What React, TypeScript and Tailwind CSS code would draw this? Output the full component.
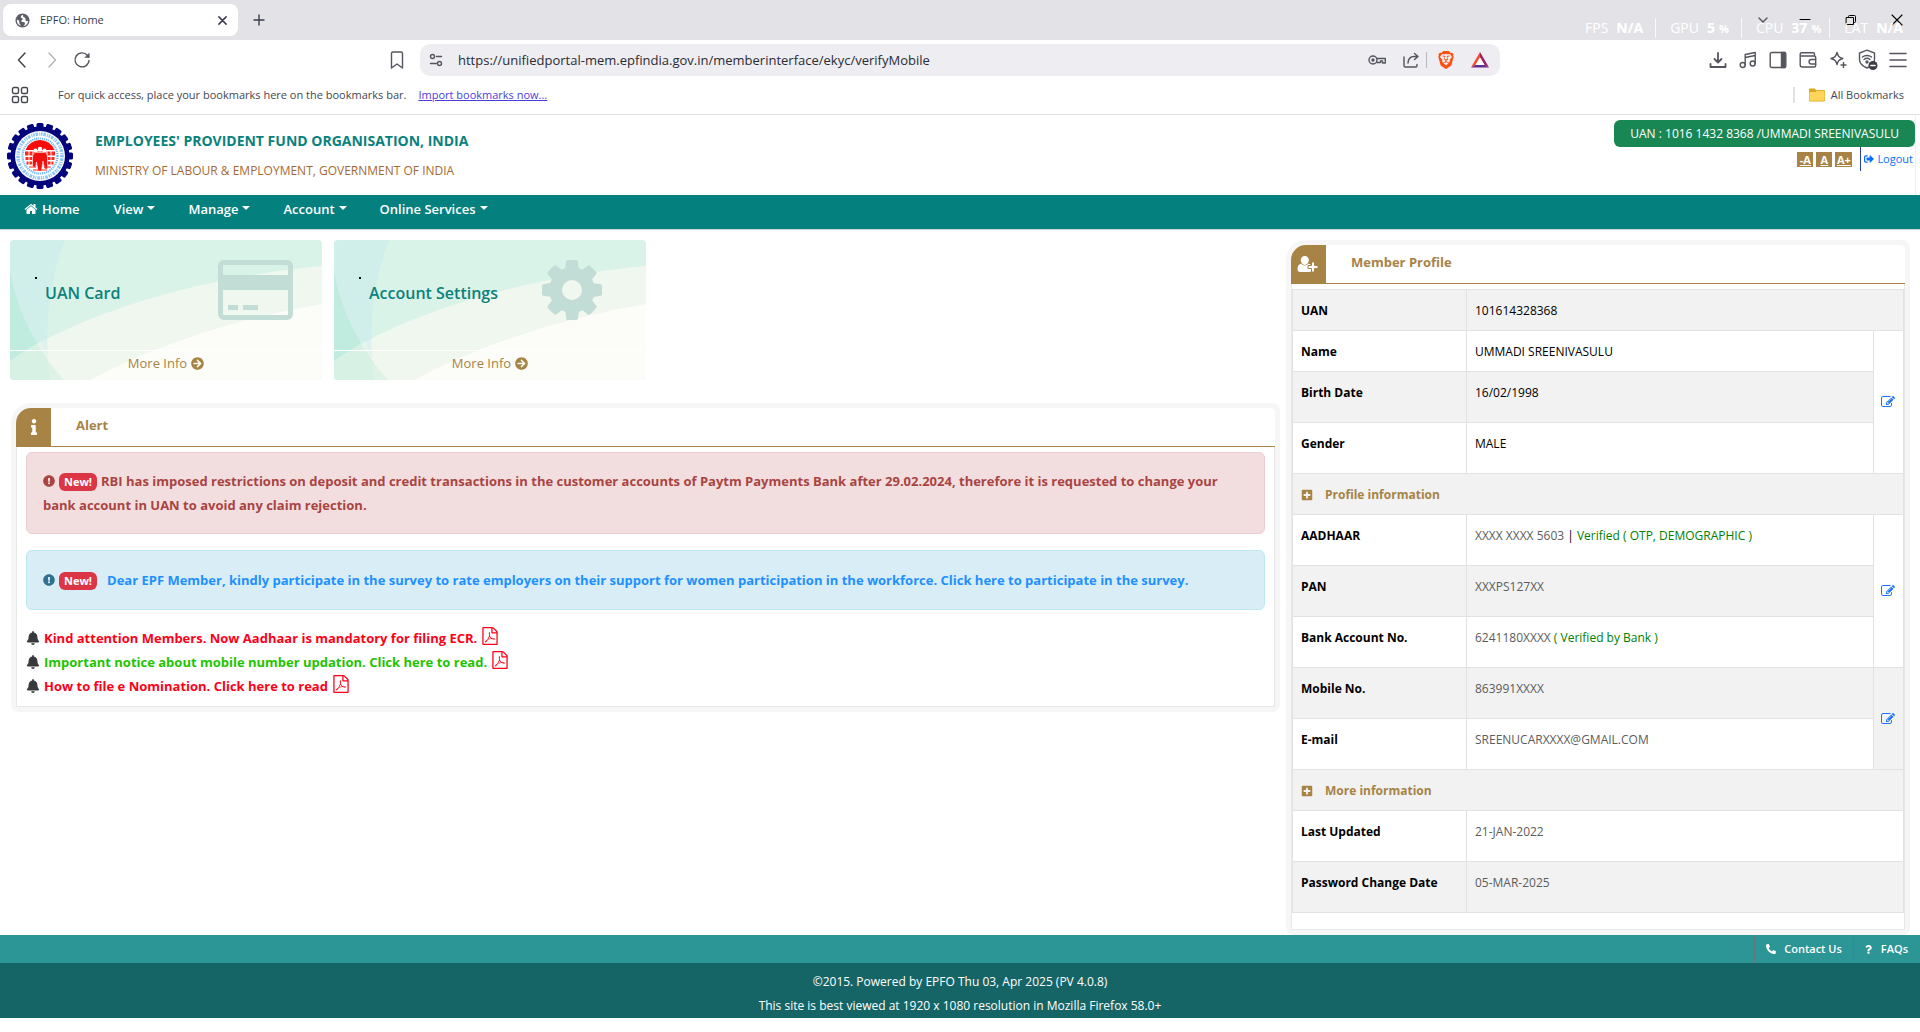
import React from 'react';
import type { ReactNode } from 'react';
import {
  FaArrowCircleRight,
  FaBell,
  FaExclamationCircle,
  FaInfo,
  FaPhoneAlt,
  FaPlusSquare,
  FaQuestion,
  FaSignOutAlt,
} from 'react-icons/fa';
import { SiBrave } from 'react-icons/si';

/* ---------- icons ---------- */

const HOME =
  'M1472 992v480q0 26-19 45t-45 19h-384v-384h-256v384h-384q-26 0-45-19t-19-45v-480q0-1 .5-3t.5-3l575-474 575 474q1 2 1 6zm223-69l-62 74q-8 9-21 11h-3q-13 0-21-7l-692-577-692 577q-12 8-24 7-13-2-21-11l-62-74q-8-10-7-23.5t11-21.5l719-599q32-26 76-26t76 26l244 204v-195q0-14 9-23t23-9h192q14 0 23 9t9 23v408l219 182q10 8 11 21.5t-7 23.5z';
const GEAR =
  'M1152 896q0-106-75-181t-181-75-181 75-75 181 75 181 181 75 181-75 75-181zm512-109v222q0 12-8 23t-20 13l-185 28q-19 54-39 91 35 50 107 138 10 12 10 25t-9 23q-27 37-99 108t-94 71q-12 0-26-9l-138-108q-44 23-91 38-16 136-29 186-7 28-36 28h-222q-14 0-24.5-8.5t-11.5-21.5l-28-184q-49-16-90-37l-141 107q-10 9-25 9-14 0-25-11-126-114-165-168-7-10-7-23 0-12 8-23 15-21 51-66.5t54-70.5q-27-50-41-99l-183-27q-13-2-21-12.5t-8-23.5v-222q0-12 8-23t19-13l186-28q14-46 39-92-40-57-107-138-10-12-10-24 0-10 9-23 26-36 98.5-107.5t94.5-71.5q13 0 26 10l138 107q44-23 91-38 16-136 29-186 7-28 36-28h222q14 0 24.5 8.5t11.5 21.5l28 184q49 16 90 37l142-107q9-9 24-9 13 0 25 10 129 119 165 170 7 8 7 22 0 12-8 23-15 21-51 66.5t-54 70.5q26 50 41 98l183 28q13 2 21 12.5t8 23.5z';
const EDIT =
  'M888 1184l116-116-152-152-116 116v56h96v96h56zm440-720q-16-16-33 1l-350 350q-17 17-1 33t33-1l350-350q17-17 1-33zm80 594v190q0 119-84.5 203.5t-203.5 84.5h-832q-119 0-203.5-84.5t-84.5-203.5v-832q0-119 84.5-203.5t203.5-84.5h832q63 0 117 25 15 7 18 23 3 17-9 29l-49 49q-14 14-32 8-23-6-45-6h-832q-66 0-113 47t-47 113v832q0 66 47 113t113 47h832q66 0 113-47t47-113v-126q0-13 9-22l64-64q15-15 35-7t20 29zm-96-738l288 288-672 672h-288v-288zm444 132l-92 92-288-288 92-92q28-28 68-28t68 28l152 152q28 28 28 68t-28 68z';
const PDF =
  'M1596 380q28 28 48 76t20 88v1152q0 40-28 68t-68 28h-1344q-40 0-68-28t-28-68v-1600q0-40 28-68t68-28h896q40 0 88 20t76 48zm-444-244v376h376q-10-29-22-41l-313-313q-12-12-41-22zm384 1528v-1024h-416q-40 0-68-28t-28-68v-416h-768v1536h1280zm-514-593q33 26 84 56 59-7 117-7 147 0 177 49 16 22 2 52 0 1-1 2l-2 2v1q-6 38-71 38-48 0-115-20t-130-53q-221 24-392 83-153 262-242 262-15 0-28-7l-24-12q-1-1-6-5-10-10-6-36 9-40 56-91.5t132-96.5q14-9 23 6 2 2 2 4 52-85 107-197 68-136 104-262-24-82-30.5-159.5t6.5-127.5q11-40 42-40h22q23 0 35 15 18 21 9 68-2 6-4 8 1 3 1 8v30q-2 123-14 192 55 164 146 238zm-576 411q52-24 137-158-51 40-87.5 84t-49.5 74zm398-920q-15 42-2 132 1-7 7-44 0-3 7-43 1-4 4-8-1-1-1-2t-1-2-1-3q-1-22-13-36 0 1-1 2v2zm-124 661q135-54 284-81-2-1-13-9.5t-16-13.5q-76-67-127-176-27 86-83 197-30 56-45 83zm646-16q-24-24-140-24 76 28 124 28 14 0 18-1 0-1-2-3z';

function Glyph({ d, className }: { d: string; className: string }) {
  return (
    <svg viewBox="0 0 1792 1792" className={className} fill="currentColor" aria-hidden="true">
      <path d={d} />
    </svg>
  );
}

function Line({
  box = '0 0 18 18',
  className = 'size-[18px]',
  children,
}: {
  box?: string;
  className?: string;
  children: ReactNode;
}) {
  return (
    <svg
      viewBox={box}
      className={className}
      fill="none"
      stroke="currentColor"
      strokeWidth={1.4}
      strokeLinecap="round"
      strokeLinejoin="round"
      aria-hidden="true"
    >
      {children}
    </svg>
  );
}

function IconButton({ label, className = '', children }: { label: string; className?: string; children: ReactNode }) {
  return (
    <button type="button" aria-label={label} className={`flex shrink-0 items-center justify-center ${className}`}>
      {children}
    </button>
  );
}

function UserPlus() {
  return (
    <svg viewBox="0 0 22 18" className="h-[18px] w-[22px]" fill="#fff" aria-hidden="true">
      <path d="M7.8 1c2.400 0 4 1.800 4 4.300S10.200 10 7.800 10 3.800 7.800 3.800 5.300 5.400 1 7.800 1Z" />
      <path d="M4.200 8.700c1 1.100 2.200 1.700 3.600 1.700s2.600-.6 3.600-1.700c2.300.2 3.700 2 3.700 5.400 0 1.900-1 2.900-2.700 2.900H3.200C1.500 17 .5 16 .5 14.100c0-3.400 1.400-5.200 3.700-5.400Z" />
      <path
        d="M14.500 7h3v3.500H21v3h-3.500V17h-3v-3.500H11v-3h3.500Z"
        stroke="#a78346"
        strokeWidth="1"
      />
    </svg>
  );
}

function Emblem() {
  const teeth = Array.from({ length: 20 }, (_, i) => i * 18);
  return (
    <svg viewBox="0 0 66 66" className="size-[66px] shrink-0" role="img" aria-label="EPFO">
      {teeth.map((a) => (
        <rect key={a} x="29.500" y="0" width="7" height="8" rx="1.500" fill="#04047c" transform={`rotate(${a} 33 33)`} />
      ))}
      <circle cx="33" cy="33" r="29.500" fill="#04047c" />
      <circle cx="33" cy="33" r="25" fill="#fff" />
      <circle cx="33" cy="33" r="22" fill="none" stroke="#5fb0f5" strokeWidth="3.400" strokeDasharray="1.500 1 2.500 1.200 1 .8" opacity=".75" />
      <circle cx="33" cy="33" r="17.500" fill="none" stroke="#5fb0f5" strokeWidth="2.200" strokeDasharray="1.200 .8" opacity=".9" />
      <circle cx="33" cy="32.500" r="15.800" fill="#fff" />
      <path d="M18.500 27a15.500 15.500 0 0 1 29 0Z" fill="#fb0a0a" />
      <path d="M18 28.500h30v4H18zM18.500 34h29v3h-29zM19.500 38.500h27v3h-27z" fill="#fb2a20" />
      <path
        d="M22 28v14M26 28v14M40 28v14M44 28v14"
        stroke="#fff"
        strokeWidth=".9"
      />
      <circle cx="28.500" cy="27.500" r="2" fill="#fff" />
      <circle cx="33" cy="26" r="2.200" fill="#fff" />
      <circle cx="37.500" cy="27.500" r="2" fill="#fff" />
      <path d="M25.500 43v-9c0-3 2-4.500 3.500-4.500h8.500c1.500 0 3 1.500 3 4.500v12h-3l-1.500-8-1.500 10h-3.500L29.500 39l-1 6Z" fill="#f01010" stroke="#fff" strokeWidth=".6" />
      <path d="M22 44h7M37 44h7M26 47h14" stroke="#fb2a20" strokeWidth="1.200" />
    </svg>
  );
}

/* ---------- browser chrome ---------- */

function Stat({ name, value, unit }: { name: string; value: string; unit?: string }) {
  return (
    <span className="flex items-center gap-2 whitespace-nowrap">
      <span>{name}</span>
      <span className="font-bold">
        {value}
        {unit && <span className="ml-1 text-[11px]">{unit}</span>}
      </span>
    </span>
  );
}

function StatsOverlay() {
  return (
    <div className="pointer-events-none absolute top-[15px] right-[17px] flex h-[26px] items-center text-sm text-white">
      <Stat name="FPS" value="N/A" />
      <span className="mr-[14px] ml-3 h-5 w-px bg-white/80" />
      <Stat name="GPU" value="5" unit="%" />
      <span className="mr-[14px] ml-3 h-5 w-px bg-white/80" />
      <Stat name="CPU" value="37" unit="%" />
      <span className="mr-[14px] ml-2 h-5 w-px bg-white/80" />
      <Stat name="LAT" value="N/A" />
    </div>
  );
}

function TabStrip() {
  return (
    <div className="relative flex h-10 items-center bg-[#e3e2e7] text-[#3b3e4f]">
      <div className="ml-[3px] flex h-8 w-[235px] items-center rounded-lg bg-white pr-2 pl-3 text-[11px]">
        <svg viewBox="0 0 16 16" className="mr-[10px] size-[15px]" aria-hidden="true">
          <circle cx="8" cy="8" r="7.500" fill="#5b5e66" />
          <path d="M8.500 1.800c-1.500.6-2.500 1.600-2.200 2.700.3.900 1.600.6 1.900 1.600.3 1.200-1.700 1.500-1.500 2.600.1.800 1.200.7 2.100.8 1.600.2 2.200 1.400 1.700 2.600-.3.800-1 1.300-1.500 1.900 3.200-.3 5-2.800 5-5.700-1.300.5-2.300.3-2.700-.7-.3-.9.200-1.600-.4-2.300-.7-.7-1.900-.4-2.200-1.500-.2-.8.100-1.500-.2-2ZM2 7c.9.200 2.300.9 2.600 2.200.2 1-.3 1.800.6 2.700.5.500 1 .8.900 1.700C3.700 13 1.700 10.800 2 7Z" fill="#fff" />
        </svg>
        <span className="flex-1">EPFO: Home</span>
        <IconButton label="Close tab" className="size-4">
          <Line box="0 0 10 10" className="size-[9px]">
            <path d="m1 1 8 8M9 1 1 9" strokeWidth={1.700} />
          </Line>
        </IconButton>
      </div>
      <IconButton label="New tab" className="ml-[13px] size-4">
        <Line box="0 0 12 12" className="size-3">
          <path d="M6 1v10M1 6h10" />
        </Line>
      </IconButton>
      <div className="ml-auto flex items-center gap-[30px] pr-[15px] text-black">
        <IconButton label="Search tabs" className="-mr-1 size-4">
          <Line box="0 0 12 12" className="size-3">
            <path d="m2 4 4 4 4-4" stroke="#55575f" />
          </Line>
        </IconButton>
        <IconButton label="Minimize" className="size-4">
          <Line box="0 0 12 12" className="size-3">
            <path d="M1 5.500h10" strokeWidth={1} />
          </Line>
        </IconButton>
        <IconButton label="Restore" className="size-4">
          <Line box="0 0 12 12" className="size-3">
            <path d="M1.500 3.500h7v7h-7zM3.500 3.500v-1a1 1 0 0 1 1-1h5a1 1 0 0 1 1 1v5a1 1 0 0 1-1 1h-1" strokeWidth={1} />
          </Line>
        </IconButton>
        <IconButton label="Close" className="size-4">
          <Line box="0 0 12 12" className="size-3">
            <path d="m1 1 10 10M11 1 1 11" strokeWidth={1.100} />
          </Line>
        </IconButton>
      </div>
      <StatsOverlay />
    </div>
  );
}

function Toolbar() {
  return (
    <div className="flex h-10 items-center text-[#54565e]">
      <div className="flex flex-1 items-center pl-[13px]">
        <IconButton label="Back" className="size-[18px]">
          <Line>
            <path d="M12 2 5.500 9l6.500 7" stroke="#3f4149" />
          </Line>
        </IconButton>
        <IconButton label="Forward" className="ml-3 size-[18px]">
          <Line>
            <path d="m6 2 6.500 7L6 16" stroke="#b3b4b9" />
          </Line>
        </IconButton>
        <IconButton label="Reload" className="ml-3 size-[18px]">
          <Line>
            <path d="M16 9.500A7 7 0 1 1 14.500 4.500l1.300 1.500" />
            <path d="M16.200 2.500v4h-4Z" fill="currentColor" strokeWidth={0.600} />
          </Line>
        </IconButton>
        <IconButton label="Bookmark this tab" className="mr-[14px] ml-auto size-[18px]">
          <Line>
            <path d="M3.500 2.500a1.500 1.500 0 0 1 1.500-1.500h8a1.500 1.500 0 0 1 1.500 1.500V17L9 13l-5.500 4Z" />
          </Line>
        </IconButton>
      </div>
      <div className="flex h-8 w-[56.250%] items-center rounded-[10px] bg-[#eeedf2] pr-[11px] pl-2">
        <IconButton label="Site information" className="size-4">
          <Line box="0 0 16 16" className="size-4">
            <circle cx="4.500" cy="4.500" r="2" />
            <path d="M8.500 4.500h5M2.500 11.500h6" />
            <circle cx="11.500" cy="11.500" r="2" />
          </Line>
        </IconButton>
        <input
          type="text"
          aria-label="Address"
          defaultValue="https://unifiedportal-mem.epfindia.gov.in/memberinterface/ekyc/verifyMobile"
          className="ml-[14px] min-w-0 flex-1 bg-transparent pt-[2px] text-[13px] text-[#2b2c33] outline-none"
        />
        <IconButton label="Passwords" className="size-[18px]">
          <Line>
            <circle cx="5" cy="9" r="4" />
            <circle cx="5" cy="9" r="1" fill="currentColor" />
            <path d="M9 7.500h8.300v4.500h-2.800v-2h-2v1.500H9" />
          </Line>
        </IconButton>
        <IconButton label="Share" className="ml-4 size-[18px]">
          <Line>
            <path d="M2 6v8.500A1.500 1.500 0 0 0 3.500 16h10a1.500 1.500 0 0 0 1.500-1.500V13.500M6 12c.3-4 2.500-6.500 6-6.500h3.500M12.500 2.500l3.500 3-3.500 3" />
          </Line>
        </IconButton>
        <span className="ml-[6px] h-4 w-px bg-[#b9bac0]" />
        <IconButton label="Brave Shields" className="ml-[10px] size-[18px]">
          <SiBrave className="size-[18px] text-[#fb5010]" />
        </IconButton>
        <IconButton label="Brave Rewards" className="ml-4 size-[18px]">
          <svg viewBox="0 0 18 18" className="size-[18px]" aria-hidden="true">
            <path d="M9 1 0 16.500l4.500-2.600L9 6.200Z" fill="#ff4724" />
            <path d="m9 1 9 15.500-4.500-2.600L9 6.200Z" fill="#9e1f63" />
            <path d="M0 16.500h18l-4.500-2.600h-9Z" fill="#662d91" />
            <path d="m9 6.200 4.500 7.700h-9Z" fill="#fff" />
          </svg>
        </IconButton>
      </div>
      <div className="flex flex-1 items-center justify-end gap-3 pr-[13px]">
        <IconButton label="Downloads" className="size-[18px]">
          <Line>
            <path d="M9 2v9M5.500 8 9 11.500 12.500 8M1.500 13v3h15v-3" strokeWidth={1.800} />
          </Line>
        </IconButton>
        <IconButton label="Playlist" className="size-[18px]">
          <Line>
            <circle cx="3.700" cy="14" r="2.500" />
            <circle cx="13.700" cy="12.500" r="2.500" />
            <path d="M6.200 14V3.500l10-2v11M6.200 6.500l10-2" />
          </Line>
        </IconButton>
        <IconButton label="Sidebar" className="size-[18px]">
          <Line>
            <rect x="1.200" y="1.500" width="15.600" height="15" rx="1.500" />
            <path d="M12.500 1.500h3.500v15h-3.500z" fill="currentColor" />
          </Line>
        </IconButton>
        <IconButton label="Wallet" className="size-[18px]">
          <Line>
            <path d="M15.500 5V3a1.200 1.200 0 0 0-1.200-1.200H2.500A1.300 1.300 0 0 0 1.200 3.100V14A2 2 0 0 0 3.200 16h12a1.500 1.500 0 0 0 1.500-1.500v-8A1.500 1.500 0 0 0 15.200 5H2.500" />
            <path d="M16.500 8.500h-4.200a2 2 0 0 0 0 4.500h4.200" />
          </Line>
        </IconButton>
        <IconButton label="Leo AI" className="size-[18px]">
          <Line>
            <path d="M8 1.500c1 3.800 2 4.800 5.800 6C10 8.700 9 9.700 8 13.500 7 9.700 6 8.700 2 7.500c4-1.200 5-2.200 6-6ZM14.500 11.500v5M12 14h5" />
          </Line>
        </IconButton>
        <IconButton label="VPN" className="size-[18px]">
          <svg viewBox="0 0 20 22" className="h-[22px] w-5 shrink-0" fill="none" stroke="currentColor" strokeWidth={1.400} strokeLinecap="round" aria-hidden="true">
            <path d="M9 1.200 16.500 4v6.500c0 4-3 6.500-7.500 8.500-4.500-2-7.500-4.500-7.500-8.500V4Z" />
            <path d="M4.500 8c2.500-2 6.500-2 9 0M6 10.500c1.800-1.500 4.200-1.500 6 0" />
            <circle cx="9" cy="13" r="1" fill="currentColor" />
            <circle cx="15" cy="16.500" r="4.500" fill="#3b3d45" stroke="none" />
            <path d="M12.800 16.500h4.400" stroke="#fff" />
          </svg>
        </IconButton>
        <IconButton label="Menu" className="size-[18px]">
          <Line>
            <path d="M1 2.500h16M1 9h16M1 15.500h16" strokeWidth={1.600} />
          </Line>
        </IconButton>
      </div>
    </div>
  );
}

function BookmarksBar() {
  return (
    <div className="flex h-[35px] items-center border-b border-[#e1e0e4] pb-1 text-[11px] text-[#45474f]">
      <IconButton label="Apps" className="ml-[11px] size-[18px]">
        <Line>
          <rect x="1.500" y="1.500" width="6" height="6" rx="1.500" />
          <rect x="10.500" y="1.500" width="6" height="6" rx="1.500" />
          <rect x="1.500" y="10.500" width="6" height="6" rx="1.500" />
          <rect x="10.500" y="10.500" width="6" height="6" rx="1.500" />
        </Line>
      </IconButton>
      <span className="ml-[29px]">For quick access, place your bookmarks here on the bookmarks bar.</span>
      <a href="#import" className="ml-3 text-[#4a3de0] underline">
        Import bookmarks now...
      </a>
      <span className="ml-auto h-4 w-[2px] bg-[#e1e0e6]" />
      <button type="button" className="mr-4 ml-[14px] flex items-center gap-[6px]">
        <svg viewBox="0 0 16 14" className="h-[14px] w-4" aria-hidden="true">
          <path d="M0 1.500A1 1 0 0 1 1 .5h4.500L7 2h8a1 1 0 0 1 1 1v9.500a1 1 0 0 1-1 1H1a1 1 0 0 1-1-1Z" fill="#dba520" />
          <path d="M.5 4h6L8 2.800h7a.6.6 0 0 1 .6.600v8.600a.8.800 0 0 1-.8.800H1.300a.8.800 0 0 1-.8-.8Z" fill="#ffd65a" />
        </svg>
        All Bookmarks
      </button>
    </div>
  );
}

/* ---------- page ---------- */

function SiteHeader() {
  return (
    <header className="mr-1 flex h-20 border-r border-[#f0f0f0]">
      <div className="ml-[7px] flex items-center gap-[22px] pt-[2px]">
        <Emblem />
        <div>
          <p className="h-[30px] text-sm font-bold text-[#0a817d]">EMPLOYEES' PROVIDENT FUND ORGANISATION, INDIA</p>
          <p className="h-5 text-xs leading-5 text-[#a56a33]">MINISTRY OF LABOUR &amp; EMPLOYMENT, GOVERNMENT OF INDIA</p>
        </div>
      </div>
      <div className="ml-auto flex flex-col items-end pt-[5px]">
        <div className="flex h-[27px] items-center rounded-md bg-[#198754] px-4 text-xs text-white">
          UAN : 1016 1432 8368 /UMMADI SREENIVASULU
        </div>
        <div className="flex items-center pr-[2px]">
          <div className="flex gap-[3px] text-[11px] leading-[15px] font-bold text-white">
            <button type="button" aria-label="Decrease text size" className="h-[15px] w-4 bg-[#a78346] underline">
              -A
            </button>
            <button type="button" aria-label="Default text size" className="h-[15px] w-4 bg-[#a78346] underline">
              A
            </button>
            <button type="button" aria-label="Increase text size" className="h-[15px] w-[17px] bg-[#a78346] underline">
              A+
            </button>
          </div>
          <a
            href="#logout"
            className="ml-2 flex h-6 items-center gap-[3px] border-l border-[#2c3e9e] pl-[3px] text-[11px] text-[#0d6efd]"
          >
            <FaSignOutAlt className="size-[10px]" />
            Logout
          </a>
        </div>
      </div>
    </header>
  );
}

function Caret() {
  return <span className="mb-[2px] border-x-4 border-t-4 border-x-transparent border-t-white" />;
}

const NAV = ['View', 'Manage', 'Account', 'Online Services'];

function NavBar() {
  return (
    <nav className="flex h-[35px] items-start border-b border-[#ccd5d5] bg-[#04817f] pt-[2px] pl-6 text-[13px] leading-6 font-semibold text-white">
      <a href="#home" className="mr-[34px] flex items-center gap-1">
        <Glyph d={HOME} className="size-[14px]" />
        Home
      </a>
      {NAV.map((item) => (
        <button key={item} type="button" className="mr-[33px] flex items-center gap-1">
          {item}
          <Caret />
        </button>
      ))}
    </nav>
  );
}

function CardIcon() {
  return (
    <svg viewBox="0 0 75 60" className="h-[60px] w-[75px]" fill="currentColor" aria-hidden="true">
      <path
        fillRule="evenodd"
        d="M6 0h63a6 6 0 0 1 6 6v48a6 6 0 0 1-6 6H6a6 6 0 0 1-6-6V6a6 6 0 0 1 6-6Zm0 5a1 1 0 0 0-1 1v9h65V6a1 1 0 0 0-1-1Zm-1 25v24a1 1 0 0 0 1 1h63a1 1 0 0 0 1-1V30Zm5 15h10v5H10Zm15 0h15v5H25Z"
      />
    </svg>
  );
}

function CardBackdrop() {
  return (
    <svg viewBox="0 0 312 140" preserveAspectRatio="none" className="absolute inset-0 size-full" aria-hidden="true">
      <path d="M0 0h312v140H0Z" fill="#daf3e8" />
      <path d="M0 121C60 78 180 38 312 26v114H0Z" fill="#f0f7ef" />
      <path d="M80 140C150 103 230 78 312 64v76Z" fill="#fcfdf8" />
      <path d="M0 0h55C40 38 33 90 40 140H0Z" fill="#c0e8f0" opacity=".4" />
      <path d="M0 32c8 40 25 75 54 108H0Z" fill="#a8e8cf" opacity=".42" />
      <path d="M0 121C12 112 22 106 31 101c6 15 14 28 23 39H0Z" fill="#f5f8ec" opacity=".35" />
    </svg>
  );
}

function InfoCard({ title, icon }: { title: string; icon: ReactNode }) {
  return (
    <a href="#card" className="relative isolate block h-[140px] w-[312px] overflow-hidden rounded">
      <div className="absolute inset-0 -z-10">
        <CardBackdrop />
      </div>
      <div className="flex h-[110px] items-start justify-between pt-5 pl-[25px]">
        <span className="mt-[17px] size-[2px] shrink-0 bg-black" />
        <span className="mt-[21px] ml-2 flex-1 text-base font-semibold text-[#0a817d]">{title}</span>
        <span className="mr-[29px] flex h-[60px] items-center justify-center text-[#c2ddd6]">{icon}</span>
      </div>
      <div className="flex h-[30px] items-center justify-center gap-1 border-t border-white pb-1 text-[13px] text-[#a78346]">
        More Info
        <FaArrowCircleRight className="size-[13px]" />
      </div>
    </a>
  );
}

function Panel({ title, icon, children }: { title: string; icon: ReactNode; children: ReactNode }) {
  return (
    <section className="rounded-lg rounded-tl-[20px] bg-[#f6f6f6] p-[5px]">
      <div className="flex h-[39px] rounded-tl-[15px] rounded-tr-[5px] border-b border-[#a78346] bg-white">
        <span className="flex w-[35px] items-center justify-center rounded-tl-[15px] bg-[#a78346] text-white">{icon}</span>
        <h2 className="ml-[25px] pt-[7px] text-[13px] leading-5 font-bold text-[#a78346]">{title}</h2>
      </div>
      <div className="border border-t-0 border-[#e8e8e8] bg-white">{children}</div>
    </section>
  );
}

function NewBadge() {
  return (
    <span className="mx-1 inline-flex h-[18px] items-center rounded-md bg-[#dc3545] px-[5px] text-[11px] font-bold text-white">
      New!
    </span>
  );
}

const NOTICES = [
  { text: 'Kind attention Members. Now Aadhaar is mandatory for filing ECR.', color: 'text-[#ff0018]' },
  { text: 'Important notice about mobile number updation. Click here to read.', color: 'text-[#1fc400]' },
  { text: 'How to file e Nomination. Click here to read', color: 'text-[#ff0018]' },
];

function AlertPanel() {
  return (
    <Panel title="Alert" icon={<FaInfo className="size-4" />}>
      <div className="px-[9px] pt-[5px] pb-2 text-[13px] leading-6 font-bold">
        <p className="mb-4 rounded-md border border-[#ebccd1] bg-[#f2dede] p-4 text-[#a94442]">
          <FaExclamationCircle className="inline size-3 align-[-1px]" />
          <NewBadge />
          RBI has imposed restrictions on deposit and credit transactions in the customer accounts of Paytm Payments Bank
          after 29.02.2024, therefore it is requested to change your bank account in UAN to avoid any claim rejection.
        </p>
        <p className="mb-4 rounded-md border border-[#bce8f1] bg-[#d9edf7] px-4 py-[17px] text-[#31708f]">
          <FaExclamationCircle className="inline size-3 align-[-1px]" />
          <NewBadge />
          <a href="#survey" className="ml-[6px] text-[#1e90ff]">
            Dear EPF Member, kindly participate in the survey to rate employers on their support for women participation in
            the workforce. Click here to participate in the survey.
          </a>
        </p>
        <ul>
          {NOTICES.map((n) => (
            <li key={n.text} className="flex h-6 items-center gap-1 text-[#37393c]">
              <FaBell className="size-[14px]" />
              <a href="#notice" className={`flex items-center gap-1 ${n.color}`}>
                {n.text}
                <Glyph d={PDF} className="mb-1 size-[18px] text-[#ff0018]" />
              </a>
            </li>
          ))}
        </ul>
      </div>
    </Panel>
  );
}

type Row = {
  label: string;
  value: ReactNode;
  tall?: boolean;
  shaded?: boolean;
  dark?: boolean;
  wide?: boolean;
  edit?: number;
};

const PERSONAL: Row[] = [
  { label: 'UAN', value: '101614328368', shaded: true, dark: true, wide: true },
  { label: 'Name', value: 'UMMADI SREENIVASULU', dark: true, edit: 3 },
  { label: 'Birth Date', value: '16/02/1998', tall: true, shaded: true, dark: true },
  { label: 'Gender', value: 'MALE', tall: true, dark: true },
];

const KYC: Row[] = [
  {
    label: 'AADHAAR',
    value: (
      <>
        XXXX XXXX 5603 <span className="text-black">|</span>{' '}
        <span className="text-[#008000]">Verified ( OTP, DEMOGRAPHIC )</span>
      </>
    ),
    tall: true,
    edit: 3,
  },
  { label: 'PAN', value: 'XXXPS127XX', tall: true, shaded: true },
  {
    label: 'Bank Account No.',
    value: (
      <>
        6241180XXXX <span className="text-[#008000]">( Verified by Bank )</span>
      </>
    ),
    tall: true,
  },
  { label: 'Mobile No.', value: '863991XXXX', tall: true, shaded: true, edit: 2 },
  { label: 'E-mail', value: 'SREENUCARXXXX@GMAIL.COM', tall: true },
];

const MORE: Row[] = [
  { label: 'Last Updated', value: '21-JAN-2022', tall: true, wide: true },
  { label: 'Password Change Date', value: '05-MAR-2025', tall: true, shaded: true, wide: true },
];

function ProfileRow({ row }: { row: Row }) {
  const bg = row.shaded ? 'bg-[#f2f2f2]' : 'bg-white';
  const pad = row.tall ? 'pt-[9px] pb-[17px]' : 'pt-[9px] pb-[7px]';
  return (
    <tr>
      <th scope="row" className={`border border-[#e5e1e3] px-2 text-left font-bold text-black ${bg} ${pad}`}>
        {row.label}
      </th>
      <td
        colSpan={row.wide ? 2 : 1}
        className={`border border-[#e5e1e3] px-2 ${bg} ${pad} ${row.dark ? 'text-black' : 'text-[#5c5c5c]'}`}
      >
        {row.value}
      </td>
      {row.edit && (
        <td rowSpan={row.edit} className={`border border-[#e5e1e3] align-middle ${bg}`}>
          <a href="#edit" aria-label={`Edit ${row.label}`} className="flex justify-center text-[#1a73f5]">
            <Glyph d={EDIT} className="size-[14px]" />
          </a>
        </td>
      )}
    </tr>
  );
}

function SectionRow({ title }: { title: string }) {
  return (
    <tr>
      <td colSpan={3} className="border border-[#e5e1e3] bg-[#f2f2f2] px-2 pt-[9px] pb-[7px] font-bold text-[#a78346]">
        <button type="button" className="flex items-center gap-3">
          <FaPlusSquare className="size-3" />
          {title}
        </button>
      </td>
    </tr>
  );
}

function ProfilePanel() {
  return (
    <Panel title="Member Profile" icon={<UserPlus />}>
      <div className="pt-[5px] pb-4">
        <table className="w-full table-fixed border-collapse text-xs leading-6">
          <colgroup>
            <col className="w-[174px]" />
            <col />
            <col className="w-[30px]" />
          </colgroup>
          <tbody>
            {PERSONAL.map((r) => (
              <ProfileRow key={r.label} row={r} />
            ))}
            <SectionRow title="Profile information" />
            {KYC.map((r) => (
              <ProfileRow key={r.label} row={r} />
            ))}
            <SectionRow title="More information" />
            {MORE.map((r) => (
              <ProfileRow key={r.label} row={r} />
            ))}
          </tbody>
        </table>
      </div>
    </Panel>
  );
}

function SiteFooter() {
  return (
    <footer className="text-white">
      <div className="flex h-7 justify-end bg-[#2c9595] pr-3 text-[11px] font-semibold">
        <a href="#contact" className="flex items-center gap-2 border-l border-[#66757a] px-[11px]">
          <FaPhoneAlt className="size-[10px]" />
          Contact Us
        </a>
        <a href="#faqs" className="flex items-center gap-2 border-l border-[#66757a] pl-[10px]">
          <FaQuestion className="size-[9px]" />
          FAQs
        </a>
      </div>
      <div className="bg-[#166566] pt-[7px] text-center text-xs leading-6">
        <p>©2015. Powered by EPFO Thu 03, Apr 2025 (PV 4.0.8)</p>
        <p>This site is best viewed at 1920 x 1080 resolution in Mozilla Firefox 58.0+</p>
      </div>
    </footer>
  );
}

export default function App() {
  return (
    <div className="min-h-screen bg-white font-['Open_Sans','Noto_Sans',sans-serif] text-black">
      <TabStrip />
      <Toolbar />
      <BookmarksBar />
      <SiteHeader />
      <NavBar />
      <main className="flex items-start pt-[10px]">
        <div className="w-2/3 pl-[10px]">
          <div className="flex gap-3">
            <InfoCard title="UAN Card" icon={<CardIcon />} />
            <InfoCard
              title="Account Settings"
              icon={<Glyph d={GEAR} className="mr-[10px] size-[70px]" />}
            />
          </div>
          <div className="mt-[23px] pl-px">
            <AlertPanel />
          </div>
        </div>
        <div className="w-1/3 pr-[10px] pl-[6px]">
          <ProfilePanel />
        </div>
      </main>
      <SiteFooter />
    </div>
  );
}
